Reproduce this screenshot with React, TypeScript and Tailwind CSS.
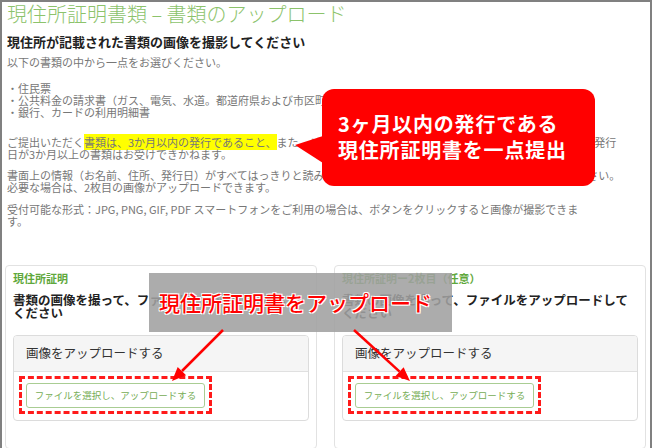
import React from "react";

const bodyText = "text-[11px] leading-[12px] text-[#777] whitespace-nowrap";

function UploadCard({ label, optional }: { label: string; optional?: string }) {
  return (
    <div className="h-[184px] w-[312px] shrink-0 rounded-[4px] border border-[#e2e2e2] bg-white px-[7px] pt-[5px]">
      <p className="text-[11px] font-bold leading-[14px] text-[#5fa83c]">
        {label}
        {optional && <span>{optional}</span>}
      </p>
      <p className="mt-[8px] whitespace-nowrap text-[12.5px] font-bold leading-[13px] text-[#222]">
        書類の画像を撮って、ファイルをアップロードして
        <br />
        ください
      </p>
      <div className="mt-[16px] overflow-hidden rounded-[4px] border border-[#dcdcdc]">
        <div className="flex h-[36px] items-center border-b border-[#e0e0e0] bg-[#f5f5f5] pl-[12px] text-[12.5px] text-[#333]">
          画像をアップロードする
        </div>
        <div className="pb-[6px] pl-[5px] pt-[4px]">
          <div className="inline-block border-[3px] border-dashed border-[#ff1a1a] px-[4px] pb-[3px] pt-[4px]">
            <button className="flex h-[25px] w-[179px] items-center justify-center rounded-[3px] border border-[#a9cd93] bg-white text-[9.5px] text-[#76ad55]">
              ファイルを選択し、アップロードする
            </button>
          </div>
        </div>
      </div>
    </div>
  );
}

export default function App() {
  return (
    <div className="relative h-[448px] w-[652px] overflow-hidden border-x-2 border-t-2 border-[#808080] bg-white font-['Noto_Sans_CJK_JP','Noto_Sans',sans-serif]">
      <div className="pl-[5px]">
        <h1 className="text-[20px] font-light leading-[24px] text-[#8cc36b]">
          現住所証明書類 – 書類のアップロード
        </h1>
        <h2 className="mt-[8px] text-[13px] font-bold leading-[16px] text-[#222]">
          現住所が記載された書類の画像を撮影してください
        </h2>
        <p className={`mt-[6px] ${bodyText}`}>以下の書類の中から一点をお選びください。</p>
        <ul className={`mt-[14px] ${bodyText}`}>
          <li>・住民票</li>
          <li>・公共料金の請求書（ガス、電気、水道。都道府県および市区町村の税金など）</li>
          <li>・銀行、カードの利用明細書</li>
        </ul>
        <p className={`mt-[18px] ${bodyText}`}>
          ご提出いただく<span className="bg-[#ffff00]">書類は、3か月以内の発行であること、</span>
          また、ご本人のお名前と現住所が記載されている事が必要です。発行
          <br />
          日が3か月以上の書類はお受けできかねます。
        </p>
        <p className={`mt-[9px] ${bodyText}`}>
          書面上の情報（お名前、住所、発行日）がすべてはっきりと読み取れるように、書類の全体をより鮮明に撮影してください。
          <br />
          必要な場合は、2枚目の画像がアップロードできます。
        </p>
        <p className={`mt-[10px] ${bodyText}`}>
          受付可能な形式：JPG, PNG, GIF, PDF スマートフォンをご利用の場合は、ボタンをクリックすると画像が撮影できま
          <br />
          す。
        </p>
      </div>

      <div className="mt-[38px] flex gap-[17px] pl-[3px]">
        <UploadCard label="現住所証明" />
        <UploadCard label="現住所証明ー2枚目" optional="（任意）" />
      </div>

      {/* callout */}
      <div className="absolute left-[320px] top-[87px] h-[97px] w-[273px] rounded-[12px] bg-[#ff0000] pl-[16px] pt-[22px] text-[20px] font-bold leading-[26px] tracking-[0.04em] text-white">
        <svg className="absolute -left-[27px] top-0" width="28" height="97" viewBox="0 0 28 97">
          <polygon points="28,47 0,56 28,74" fill="#ff0000" />
        </svg>
        <p>3ヶ月以内の発行である</p>
        <p>現住所証明書を一点提出</p>
      </div>

      {/* gray label */}
      <div className="absolute left-[147px] top-[271px] flex h-[59px] w-[303px] items-center bg-[rgba(160,160,160,0.88)] pl-[10px] text-[21px] font-medium text-[#ff0000] [text-shadow:-1px_-1px_0_#fff,1px_-1px_0_#fff,-1px_1px_0_#fff,1px_1px_0_#fff]">
        現住所証明書をアップロード
      </div>

      {/* arrows */}
      <svg className="pointer-events-none absolute left-0 top-0" width="652" height="448" viewBox="0 0 652 448">
        <line x1="221" y1="328" x2="180" y2="369" stroke="#ff0000" strokeWidth="2.5" />
        <polygon points="170,379 184.1,373.3 175.7,364.9" fill="#ff0000" />
        <line x1="352" y1="328" x2="397.6" y2="369.6" stroke="#ff0000" strokeWidth="2.5" />
        <polygon points="408,379 393.6,374 401.6,365.2" fill="#ff0000" />
      </svg>
    </div>
  );
}
